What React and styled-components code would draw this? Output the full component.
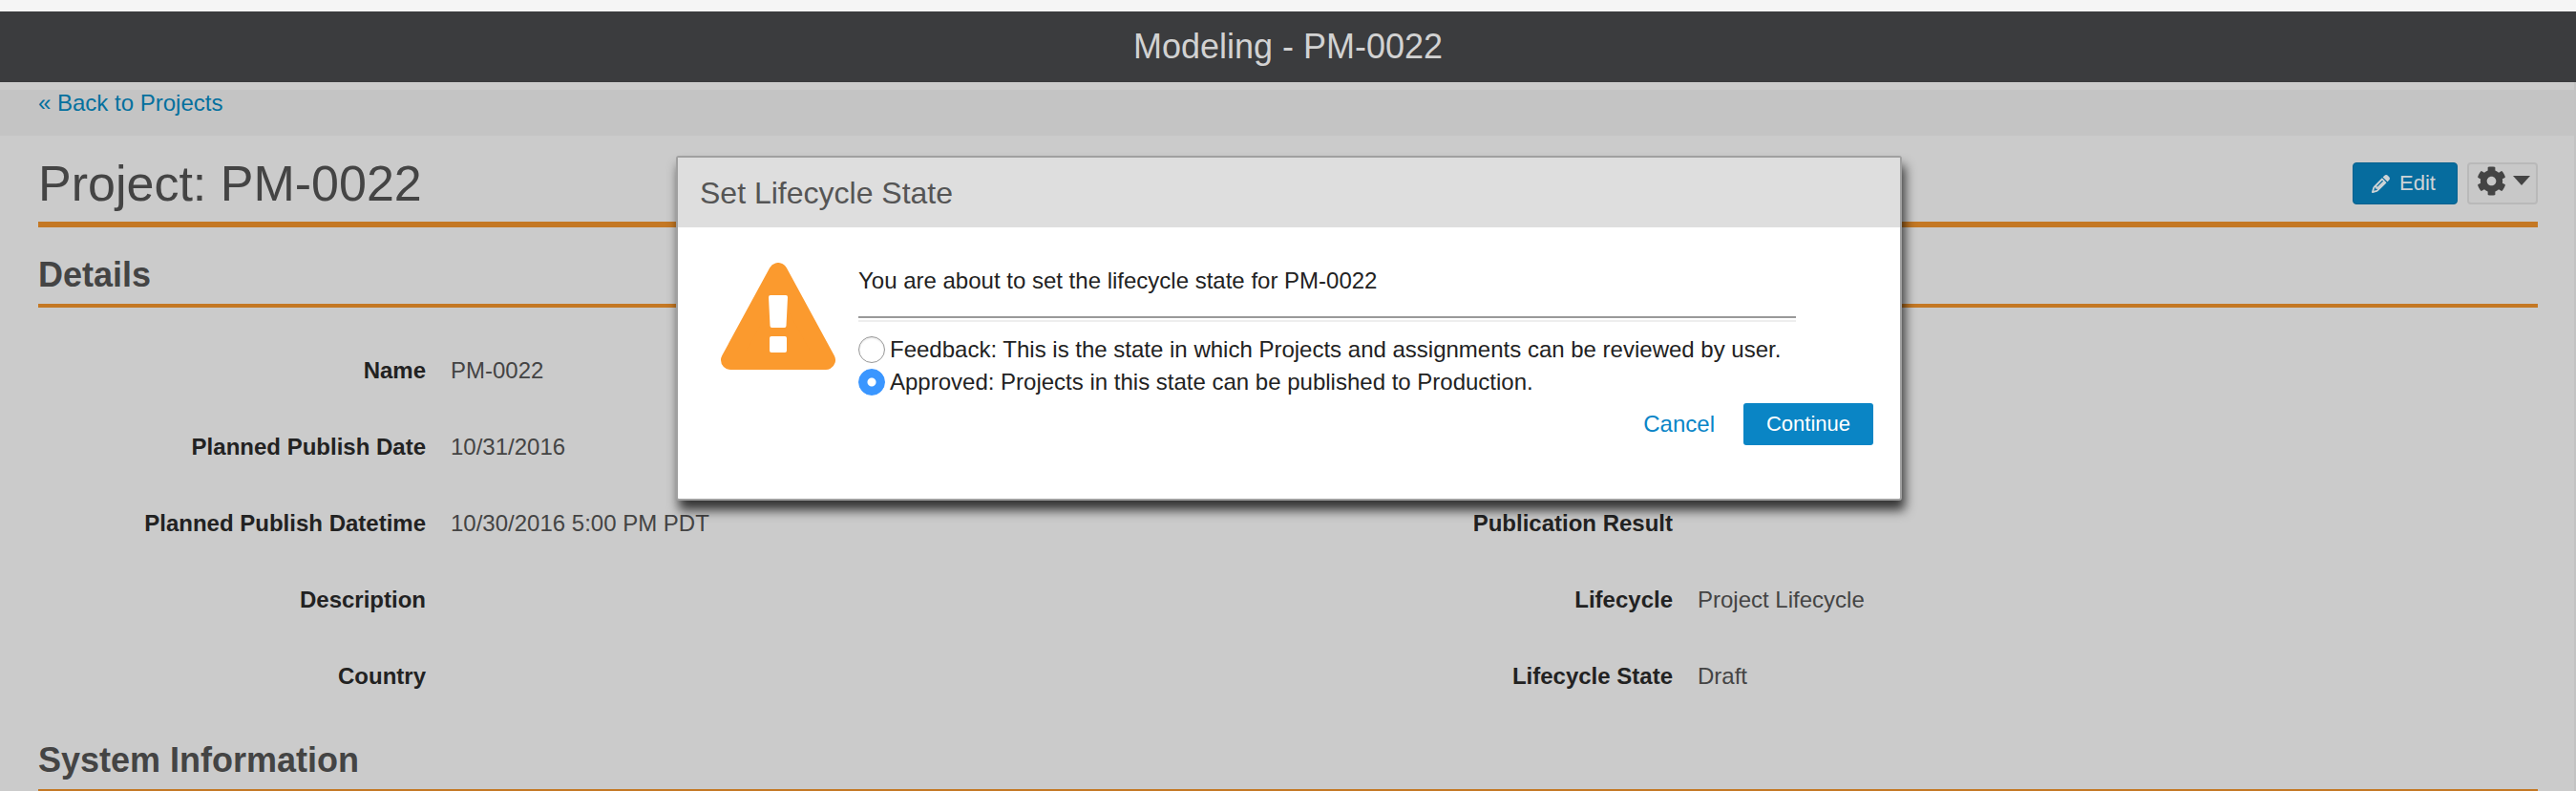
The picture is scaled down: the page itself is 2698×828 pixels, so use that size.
import React from 'react';
import styled, { createGlobalStyle } from 'styled-components';
import { FaCog } from 'react-icons/fa';
import { FaPencil } from 'react-icons/fa6';

const GlobalStyle = createGlobalStyle`
  html, body {
    margin: 0;
    height: 100%;
    overflow: hidden;
    background: #f5f5f5;
    font-family: "Liberation Sans", Arial, sans-serif;
  }
`;

const Page = styled.div`
  position: relative;
  width: 2698px;
  height: 828px;
  padding-top: 12px;
  box-sizing: border-box;
  overflow: hidden;
`;

const TopBar = styled.header`
  display: flex;
  align-items: center;
  justify-content: center;
  height: 74px;
  background: #3b3c3e;
  color: #d2d2d2;
  font-size: 36px;
`;

const Main = styled.main`
  height: 742px;
  box-sizing: border-box;
  padding-top: 8px;
  background: #cbcbcb;
  border-right: 2px solid #c3c3c3;
`;

const SubNav = styled.nav`
  height: 48px;
  padding-left: 40px;
  background: #c4c4c4;
  line-height: 27px;
`;

const BackLink = styled.a`
  color: #04709e;
  font-size: 24px;
  text-decoration: none;
`;

const Content = styled.div`
  padding: 0 38px 0 40px;
`;

const PageHead = styled.div`
  display: flex;
  align-items: center;
  justify-content: space-between;
  height: 44px;
  padding: 28px 0 18px;
  border-bottom: 6px solid #c47824;
`;

const PageTitle = styled.h1`
  margin: 0;
  color: #444;
  font-size: 52px;
  font-weight: 400;
`;

const Actions = styled.div`
  display: flex;
  gap: 10px;
`;

const EditButton = styled.button`
  display: flex;
  align-items: center;
  gap: 10px;
  width: 110px;
  height: 44px;
  padding: 0 0 0 19px;
  box-sizing: border-box;
  border: 1px solid #05618f;
  border-radius: 4px;
  background: #066c9e;
  color: #cdd3d6;
  font: 22px "Liberation Sans", Arial, sans-serif;
`;

const GearButton = styled.button`
  display: flex;
  align-items: flex-start;
  gap: 7px;
  width: 74px;
  height: 44px;
  padding: 2px 0 0 8px;
  box-sizing: border-box;
  border: 2px solid #b9b9b9;
  border-radius: 4px;
  background: #c8c8c8;
  color: #444;
`;

const Caret = styled.span`
  margin-top: 10px;
  border-top: 10px solid #444;
  border-left: 9px solid transparent;
  border-right: 9px solid transparent;
`;

const SectionTitle = styled.h2`
  margin: ${(p) => p.$top}px 0 0;
  padding-bottom: ${(p) => p.$pad}px;
  border-bottom: 4px solid #c47824;
  color: #444;
  font-size: 36px;
  font-weight: 700;
  line-height: 40px;
`;

const DetailsGrid = styled.div`
  display: grid;
  grid-template-columns: 1306px 1fr;
  margin-top: 26px;
`;

const DetailsColumn = styled.div`
  padding-top: ${(p) => p.$offset || 0}px;
`;

const DetailRow = styled.div`
  display: grid;
  grid-template-columns: 406px 1fr;
  gap: 26px;
  align-items: center;
  height: 80px;
  font-size: 24px;
`;

const Label = styled.span`
  color: #222;
  font-weight: 700;
  text-align: right;
`;

const Value = styled.span`
  color: #444;
`;

const Modal = styled.section`
  position: absolute;
  left: 708px;
  top: 163px;
  width: 1284px;
  height: 361px;
  box-sizing: border-box;
  border: 2px solid #a0a0a0;
  border-radius: 3px;
  background: #fff;
  box-shadow: 3px 10px 12px rgba(0, 0, 0, 0.75);
`;

const ModalHeader = styled.div`
  display: flex;
  align-items: center;
  height: 73px;
  padding: 2px 0 0 23px;
  box-sizing: border-box;
  background: #dedede;
  color: #555;
  font-size: 32px;
`;

const ModalBody = styled.div`
  display: flex;
  padding: 35px 0 0 45px;
`;

const WarningIcon = styled.svg`
  flex: none;
  width: 120px;
  height: 112px;
  margin-top: 2px;
`;

const ModalText = styled.div`
  width: 1063px;
  margin-left: 24px;
  color: #222;
  font-size: 24px;
`;

const Message = styled.p`
  margin: 5px 0 0;
  line-height: 32px;
`;

const Rule = styled.hr`
  width: 982px;
  height: 2px;
  margin: 21px 0 15px;
  border: 0;
  border-top: 2px solid #999;
  border-bottom: 2px solid #eee;
`;

const RadioRow = styled.label`
  display: flex;
  align-items: center;
  gap: 5px;
  height: 28px;
  margin-bottom: 6px;
`;

const Radio = styled.input`
  appearance: none;
  flex: none;
  width: 28px;
  height: 28px;
  margin: 0;
  border: 1px solid #999;
  border-radius: 50%;
  background: #fff;
  box-shadow: inset 0 1px 2px rgba(0, 0, 0, 0.12);

  &:checked {
    border-color: #3a96ff;
    background: radial-gradient(circle, #fff 0 4px, #3a96ff 5px);
    box-shadow: none;
  }
`;

const ModalActions = styled.div`
  display: flex;
  align-items: center;
  justify-content: flex-end;
  gap: 30px;
  margin-top: 8px;
`;

const CancelLink = styled.a`
  color: #0a85c7;
  font-size: 24px;
`;

const ContinueButton = styled.button`
  width: 136px;
  height: 44px;
  border: 0;
  border-radius: 3px;
  background: #0a85c5;
  color: #fff;
  font: 22px "Liberation Sans", Arial, sans-serif;
`;

const leftRows = [
  ['Name', 'PM-0022'],
  ['Planned Publish Date', '10/31/2016'],
  ['Planned Publish Datetime', '10/30/2016 5:00 PM PDT'],
  ['Description', ''],
  ['Country', ''],
];

const rightRows = [
  ['Publication Result', ''],
  ['Lifecycle', 'Project Lifecycle'],
  ['Lifecycle State', 'Draft'],
];

function Details({ rows, offset }) {
  return (
    <DetailsColumn $offset={offset}>
      {rows.map(([label, value]) => (
        <DetailRow key={label}>
          <Label>{label}</Label>
          <Value>{value}</Value>
        </DetailRow>
      ))}
    </DetailsColumn>
  );
}

export default function App() {
  return (
    <Page>
      <GlobalStyle />
      <TopBar>Modeling - PM-0022</TopBar>
      <Main>
        <SubNav>
          <BackLink href="#projects">« Back to Projects</BackLink>
        </SubNav>
        <Content>
          <PageHead>
            <PageTitle>Project: PM-0022</PageTitle>
            <Actions>
              <EditButton>
                <FaPencil size={19} />
                Edit
              </EditButton>
              <GearButton>
                <FaCog size={31} />
                <Caret />
              </GearButton>
            </Actions>
          </PageHead>
          <SectionTitle $top={30} $pad={10}>Details</SectionTitle>
          <DetailsGrid>
            <Details rows={leftRows} />
            <Details rows={rightRows} offset={160} />
          </DetailsGrid>
          <SectionTitle $top={28} $pad={10}>System Information</SectionTitle>
        </Content>
      </Main>
      <Modal>
        <ModalHeader>Set Lifecycle State</ModalHeader>
        <ModalBody>
          <WarningIcon viewBox="0 0 120 112">
            <polygon
              points="60,10 110,102 10,102"
              fill="#fb9a2e"
              stroke="#fb9a2e"
              strokeWidth="20"
              strokeLinejoin="round"
            />
            <path d="M52 34h16a2 2 0 0 1 2 2l-1.500 30a2 2 0 0 1-2 2h-13a2 2 0 0 1-2-2L50 36a2 2 0 0 1 2-2z" fill="#fff" />
            <rect x="51" y="77" width="18" height="17" rx="2" fill="#fff" />
          </WarningIcon>
          <ModalText>
            <Message>You are about to set the lifecycle state for PM-0022</Message>
            <Rule />
            <RadioRow>
              <Radio type="radio" name="state" />
              Feedback: This is the state in which Projects and assignments can be reviewed by user.
            </RadioRow>
            <RadioRow>
              <Radio type="radio" name="state" defaultChecked />
              Approved: Projects in this state can be published to Production.
            </RadioRow>
            <ModalActions>
              <CancelLink>Cancel</CancelLink>
              <ContinueButton>Continue</ContinueButton>
            </ModalActions>
          </ModalText>
        </ModalBody>
      </Modal>
    </Page>
  );
}
